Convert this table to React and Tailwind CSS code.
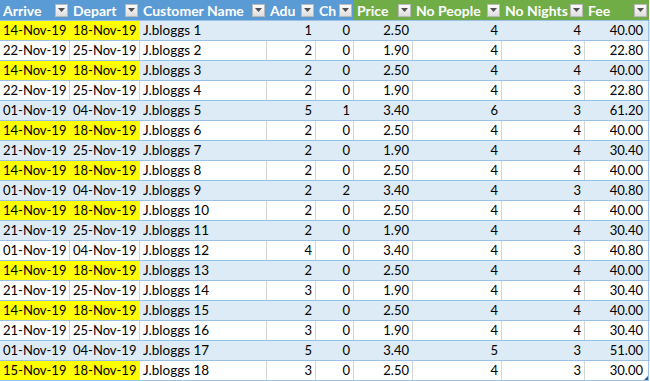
import React from 'react';

const cols = [
  { name: 'Arrive', w: 'w-[70px]', head: 'blue', align: 'left' },
  { name: 'Depart', w: 'w-[70px]', head: 'blue', align: 'left' },
  { name: 'Customer Name', w: 'w-[127px]', head: 'blue', align: 'left' },
  { name: 'Adu', w: 'w-[49px]', head: 'blue', align: 'right' },
  { name: 'Ch', w: 'w-[38px]', head: 'blue', align: 'right' },
  { name: 'Price', w: 'w-[59px]', head: 'green', align: 'right' },
  { name: 'No People', w: 'w-[89px]', head: 'green', align: 'right' },
  { name: 'No Nights', w: 'w-[83px]', head: 'green', align: 'right' },
  { name: 'Fee', w: 'w-[64px]', head: 'green', align: 'right' },
];

// arrive, depart, adults, children, price, people, nights, fee, highlighted
const rows = [
  ['14-Nov-19', '18-Nov-19', 1, 0, '2.50', 4, 4, '40.00', true],
  ['22-Nov-19', '25-Nov-19', 2, 0, '1.90', 4, 3, '22.80', false],
  ['14-Nov-19', '18-Nov-19', 2, 0, '2.50', 4, 4, '40.00', true],
  ['22-Nov-19', '25-Nov-19', 2, 0, '1.90', 4, 3, '22.80', false],
  ['01-Nov-19', '04-Nov-19', 5, 1, '3.40', 6, 3, '61.20', false],
  ['14-Nov-19', '18-Nov-19', 2, 0, '2.50', 4, 4, '40.00', true],
  ['21-Nov-19', '25-Nov-19', 2, 0, '1.90', 4, 4, '30.40', false],
  ['14-Nov-19', '18-Nov-19', 2, 0, '2.50', 4, 4, '40.00', true],
  ['01-Nov-19', '04-Nov-19', 2, 2, '3.40', 4, 3, '40.80', false],
  ['14-Nov-19', '18-Nov-19', 2, 0, '2.50', 4, 4, '40.00', true],
  ['21-Nov-19', '25-Nov-19', 2, 0, '1.90', 4, 4, '30.40', false],
  ['01-Nov-19', '04-Nov-19', 4, 0, '3.40', 4, 3, '40.80', false],
  ['14-Nov-19', '18-Nov-19', 2, 0, '2.50', 4, 4, '40.00', true],
  ['21-Nov-19', '25-Nov-19', 3, 0, '1.90', 4, 4, '30.40', false],
  ['14-Nov-19', '18-Nov-19', 2, 0, '2.50', 4, 4, '40.00', true],
  ['21-Nov-19', '25-Nov-19', 3, 0, '1.90', 4, 4, '30.40', false],
  ['01-Nov-19', '04-Nov-19', 5, 0, '3.40', 5, 3, '51.00', false],
  ['15-Nov-19', '18-Nov-19', 3, 0, '2.50', 4, 3, '30.00', true],
];

const FilterButton = () => (
  <span className="ml-auto flex h-[13px] w-[13px] shrink-0 items-center justify-center border border-[#b9b9b9] bg-linear-to-b from-[#fbfbfb] to-[#dedede]">
    <svg width="7" height="4" viewBox="0 0 7 4">
      <polygon points="0,0 7,0 3.5,4" fill="#505050" />
    </svg>
  </span>
);

const App = () => {
  return (
    <div
      className="relative h-[381px] w-[650px] overflow-hidden bg-white text-[13px] text-black"
      style={{ fontFamily: 'Lato, "Open Sans", sans-serif' }}
    >
      {/* Header row */}
      <div className="flex h-[20px] text-[14px]">
        {cols.map((c) => (
          <div
            key={c.name}
            className={`flex items-center pl-[3px] pr-[2px] font-bold text-white ${c.w} ${
              c.head === 'blue' ? 'bg-[#5b9bd5]' : 'bg-[#70ad47]'
            }`}
          >
            <span className="whitespace-nowrap">{c.name}</span>
            <FilterButton />
          </div>
        ))}
      </div>

      {/* Data rows */}
      {rows.map((r, i) => {
        const banded = i % 2 === 0;
        const [arrive, depart, adu, ch, price, people, nights, fee, hl] = r;
        const cells = [arrive, depart, `J.bloggs ${i + 1}`, adu, ch, price, people, nights, fee];
        return (
          <div
            key={i}
            className={`flex h-[20px] border-t border-[#9bc2e6] ${banded ? 'bg-[#ddebf7]' : 'bg-white'}`}
          >
            {cells.map((v, j) => {
              const yellow = hl && j < 2;
              const last = j === cells.length - 1;
              let border = banded ? 'border-[#ddebf7]' : 'border-[#d4d4d4]';
              if (yellow) border = 'border-[#ffff00]';
              if (last) border = 'border-[#9bc2e6]';
              return (
                <div
                  key={j}
                  className={`flex items-center whitespace-nowrap border-r ${border} ${cols[j].w} ${
                    yellow ? 'bg-[#ffff00]' : ''
                  } ${cols[j].align === 'left' ? 'justify-start pl-[3px]' : 'justify-end pr-[3px]'} ${
                    last ? 'pr-[5px]' : ''
                  } ${j === 2 ? 'text-[13.5px]' : ''}`}
                >
                  {v}
                </div>
              );
            })}
          </div>
        );
      })}
      <div className="h-0 w-[649px] border-t border-[#9bc2e6]" />

      {/* resize handle */}
      <svg className="absolute bottom-[1px] right-[2px]" width="4" height="4" viewBox="0 0 4 4">
        <polygon points="4,0 4,4 0,4" fill="#2f5597" />
      </svg>
    </div>
  );
};

export default App;
